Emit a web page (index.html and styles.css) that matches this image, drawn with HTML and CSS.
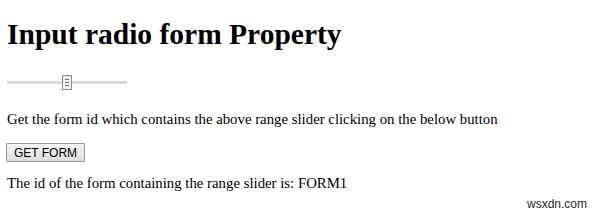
FILE: index.html
```html
<!DOCTYPE html>
<html>
<head>
<meta charset="utf-8">
<link rel="stylesheet" href="styles.css">
</head>
<body>
<div class="page">
  <h1 class="title">Input radio form Property</h1>
  <form id="FORM1" class="slider-form">
    <input type="range" class="slider" min="0" max="100" value="50">
  </form>
  <p class="text desc">Get the form id which contains the above range slider clicking on the below button</p>
  <button class="btn" type="button">GET FORM</button>
  <p class="text result">The id of the form containing the range slider is: FORM1</p>
</div>
<div class="watermark">wsxdn.com</div>
</body>
</html>
```
FILE: styles.css
```css
html, body {
  margin: 0;
  padding: 0;
  background: #ffffff;
}
body {
  width: 600px;
  height: 216px;
  position: relative;
  overflow: hidden;
  font-family: "Liberation Serif", "Times New Roman", serif;
  color: #000;
}
.page {
  padding: 16.5px 7px 0 7px;
  display: flex;
  flex-direction: column;
  align-items: flex-start;
}
.title {
  margin: 0;
  font-size: 29.5px;
  font-weight: bold;
  line-height: 34px;
}
.slider-form {
  margin: 23.5px 0 0 0;
  display: flex;
}
.slider {
  -webkit-appearance: none;
  appearance: none;
  margin: 0;
  padding: 0;
  width: 120px;
  height: 16px;
  background: transparent;
}
.slider::-webkit-slider-runnable-track {
  height: 3px;
  background: #dcdad6;
}
.slider::-webkit-slider-thumb {
  -webkit-appearance: none;
  width: 10px;
  height: 15px;
  margin-top: -6px;
  box-sizing: border-box;
  border: 1px solid #8c8c8c;
  background-color: #f1f0ee;
  background-image:
    linear-gradient(#6e6e6e, #6e6e6e),
    linear-gradient(#6e6e6e, #6e6e6e),
    linear-gradient(#6e6e6e, #6e6e6e);
  background-size: 4px 1px, 4px 1px, 4px 1px;
  background-position: 2px 3px, 2px 6px, 2px 9px;
  background-repeat: no-repeat;
}
.text {
  margin: 0;
  font-size: 14.8px;
  line-height: 17px;
}
.desc {
  margin-top: 21.4px;
}
.btn {
  margin: 14.6px 0 0 -1px;
  font-family: "Liberation Sans", Arial, sans-serif;
  font-size: 12px;
  line-height: 14px;
  padding: 2px 7px 1px 7px;
  border: 1px solid #9a9a9a;
  border-radius: 1px;
  background: linear-gradient(#f4f4f4, #dedede);
  color: #000;
}
.result {
  margin-top: 12.7px;
}
.watermark {
  position: absolute;
  left: 527px;
  top: 197px;
  font-family: "Liberation Sans", Arial, sans-serif;
  font-size: 12px;
  line-height: 14px;
  color: #2a2a2a;
}
```
